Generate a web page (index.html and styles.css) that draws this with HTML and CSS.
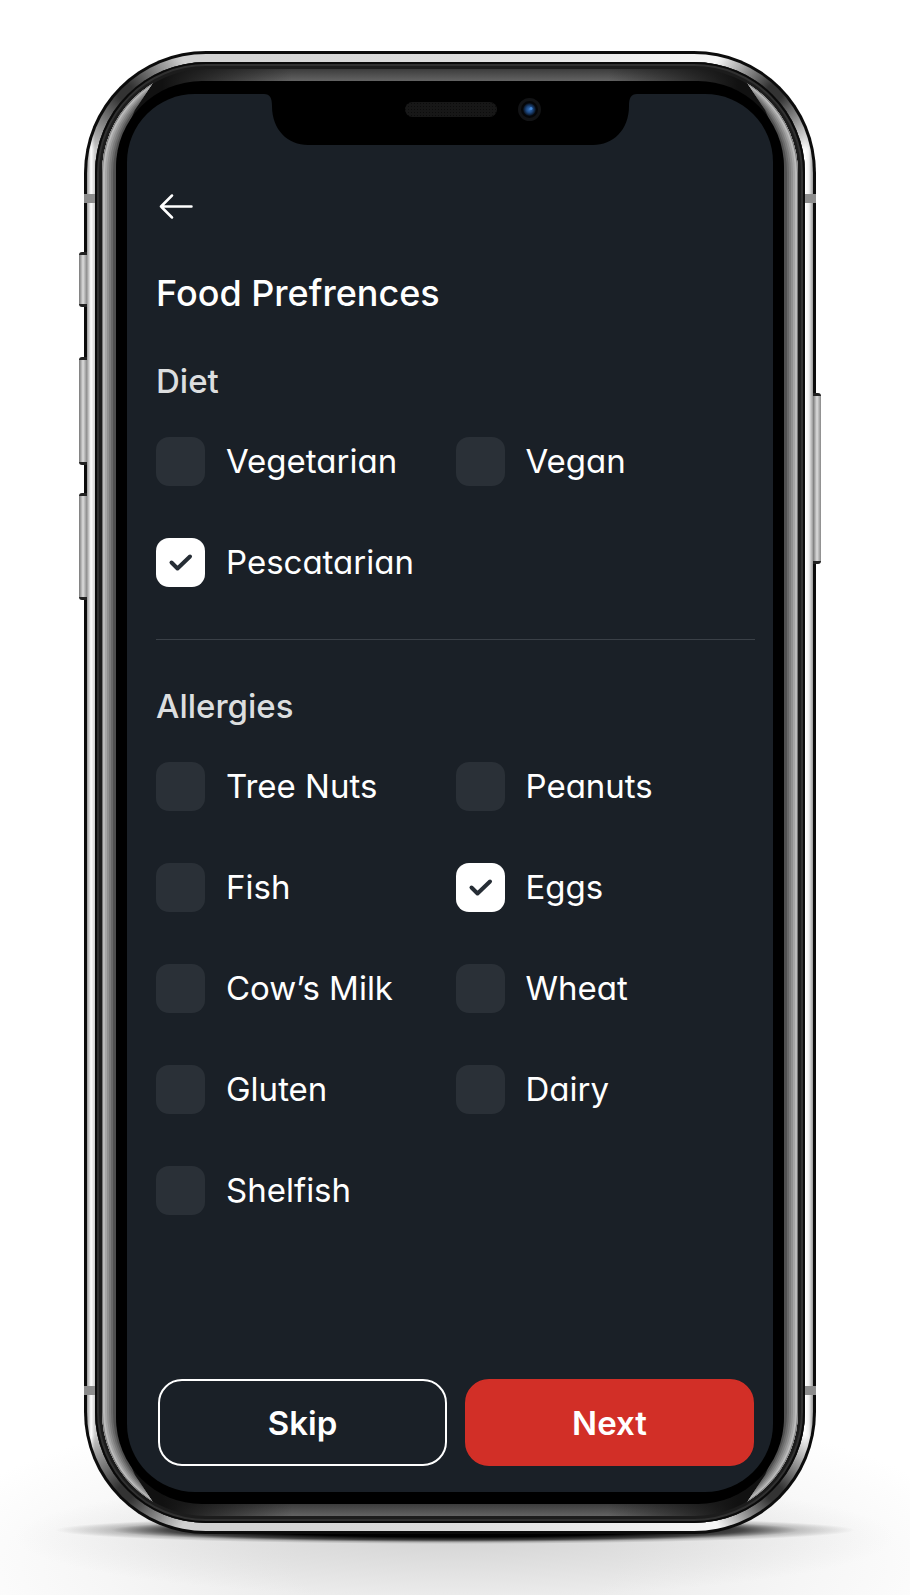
FILE: index.html
```html
<!DOCTYPE html>
<html lang="en">
  <head>
    <meta charset="UTF-8" />
    <meta name="viewport" content="width=device-width, initial-scale=1.0" />
    <title>Food Prefrences</title>
    <link rel="stylesheet" href="styles.css">
  </head>
  <body>
    <div class="stage">
      <div class="phone">
        <span class="side-button mute"></span>
        <span class="side-button volume-up"></span>
        <span class="side-button volume-down"></span>
        <span class="side-button power"></span>
        <div class="rail">
          <span class="antenna top-left"></span>
          <span class="antenna top-right"></span>
          <span class="antenna bottom-left"></span>
          <span class="antenna bottom-right"></span>
          <div class="seam">
            <div class="bezel">
              <div class="glass">
                <main class="screen">
                  <svg class="notch" width="373" height="51" viewBox="0 0 373 51" aria-hidden="true">
                    <defs>
                      <pattern id="mesh" width="3" height="3" patternUnits="userSpaceOnUse">
                        <rect width="3" height="3" fill="#171717" />
                        <rect width="1" height="1" fill="#0c0c0c" />
                      </pattern>
                      <radialGradient id="lens">
                        <stop offset="0" stop-color="#3874bd" />
                        <stop offset="0.5" stop-color="#1d477f" />
                        <stop offset="1" stop-color="#070d16" />
                      </radialGradient>
                    </defs>
                    <path d="M0 0C6 0 8 4 8 12C8 36 24 51 44 51H329C349 51 365 36 365 12C365 4 367 0 373 0Z" fill="#000" />
                    <rect x="141" y="8" width="92" height="15" rx="7.5" fill="url(#mesh)" />
                    <circle cx="265.500" cy="15.500" r="10" fill="#050608" stroke="#121315" stroke-width="3" />
                    <circle cx="265.500" cy="15.500" r="6.500" fill="url(#lens)" />
                    <circle cx="267" cy="14.500" r="1.500" fill="#4488d8" />
                  </svg>

                  <form class="content">
                    <button type="button" class="back" aria-label="Back">
                      <svg width="35" height="25" viewBox="0 0 35 25" fill="none" stroke="#fff" stroke-width="2.500" stroke-linecap="round" stroke-linejoin="round">
                        <path d="M14 1.500L3 12.500L14 23.500M3 12.500H33.500" />
                      </svg>
                    </button>
                    <h1>Food Prefrences</h1>

                    <fieldset class="group diet">
                      <legend>Diet</legend>
                      <div class="options">
                        <label><input type="checkbox" name="diet">Vegetarian</label>
                        <label><input type="checkbox" name="diet">Vegan</label>
                        <label><input type="checkbox" name="diet" checked>Pescatarian</label>
                      </div>
                    </fieldset>

                    <hr>

                    <fieldset class="group">
                      <legend>Allergies</legend>
                      <div class="options">
                        <label><input type="checkbox" name="allergy">Tree Nuts</label>
                        <label><input type="checkbox" name="allergy">Peanuts</label>
                        <label><input type="checkbox" name="allergy">Fish</label>
                        <label><input type="checkbox" name="allergy" checked>Eggs</label>
                        <label><input type="checkbox" name="allergy">Cow’s Milk</label>
                        <label><input type="checkbox" name="allergy">Wheat</label>
                        <label><input type="checkbox" name="allergy">Gluten</label>
                        <label><input type="checkbox" name="allergy">Dairy</label>
                        <label><input type="checkbox" name="allergy">Shelfish</label>
                      </div>
                    </fieldset>

                    <div class="actions">
                      <button type="button" class="skip">Skip</button>
                      <button type="submit" class="next">Next</button>
                    </div>
                  </form>
                </main>
              </div>
            </div>
          </div>
        </div>
      </div>
    </div>
  </body>
</html>
```

FILE: styles.css
```css
* {
  box-sizing: border-box;
}
body {
  margin: 0;
  background: #fff;
  font-family: Inter, "Noto Sans", sans-serif;
  font-feature-settings: "cv11";
}
/* floor shadow under the phone */
.stage {
  padding: 51px 94px 61px 84px;
  background:
    radial-gradient(ellipse 400px 14px at 50% calc(100% - 65px), #000 50%, rgba(0, 0, 0, 0.7) 72%, rgba(0, 0, 0, 0.2) 86%, transparent 100%) no-repeat,
    radial-gradient(ellipse 440px 60px at 50% calc(100% - 58px), #d4d4d4, transparent) no-repeat,
    radial-gradient(ellipse 540px 170px at 50% calc(100% - 30px), #ececec 30%, #f6f6f6 65%, #fff 100%) no-repeat;
}
.phone {
  position: relative;
  max-width: 732px;
  margin: 0 auto;
  padding: 3px;
  border-radius: 122px;
  background: #0c0c0c;
}
.rail {
  position: relative;
  padding: 8px;
  border-radius: 119px;
  background:
    radial-gradient(circle at 38px 38px, #333 8px, transparent 66px),
    radial-gradient(circle at calc(100% - 38px) 38px, #333 8px, transparent 66px),
    radial-gradient(circle at 38px calc(100% - 38px), #333 8px, transparent 66px),
    radial-gradient(circle at calc(100% - 38px) calc(100% - 38px), #333 8px, transparent 66px),
    linear-gradient(to right, #999, #fff 4px, #ccc 8px, #dcdcdc 50%, #fff calc(100% - 8px), #eee calc(100% - 4px), #999);
}
.seam {
  padding: 7px;
  border-radius: 111px;
  background: #1c1c1c;
  box-shadow: inset 0 0 0 2px #0a0a0a, inset 0 0 0 4px #303030;
}
.bezel {
  position: relative;
  padding: 12px 14px;
  border-radius: 104px;
  background:
    linear-gradient(to right, #111 60px, transparent 190px, transparent calc(100% - 190px), #111 calc(100% - 60px)),
    linear-gradient(#3c3c3c, #636363 12px, #333 50%, #3c3c3c calc(100% - 12px), #636363);
}
/* side reflections that taper off into the corners */
.bezel::before {
  content: "";
  position: absolute;
  inset: 0;
  border-radius: inherit;
  clip-path: polygon(
    0 0, 54px 9px, 33px 41px, 22px 66px, 16px 100px,
    16px calc(100% - 100px), 22px calc(100% - 66px), 33px calc(100% - 41px), 54px calc(100% - 9px), 0 100%,
    0 0, 100% 0,
    calc(100% - 54px) 9px, calc(100% - 33px) 41px, calc(100% - 22px) 66px, calc(100% - 16px) 100px,
    calc(100% - 16px) calc(100% - 100px), calc(100% - 22px) calc(100% - 66px), calc(100% - 33px) calc(100% - 41px), calc(100% - 54px) calc(100% - 9px), 100% 100%,
    100% 0
  );
  box-shadow:
    inset 1px 0 #777, inset -1px 0 #777,
    inset 3px 0 #bbb, inset -3px 0 #bbb,
    inset 5px 0 #a5a5a5, inset -5px 0 #a5a5a5,
    inset 7px 0 #909090, inset -7px 0 #909090,
    inset 9px 0 #7c7c7c, inset -9px 0 #7c7c7c,
    inset 11px 0 #686868, inset -11px 0 #686868,
    inset 14px 0 #505050, inset -14px 0 #505050;
}
.glass {
  position: relative;
  padding: 13px 11px 12px;
  border-radius: 86px;
  background: #000;
}
.screen {
  display: flex;
  flex-direction: column;
  border-radius: 68px;
  background: #1a2027;
  color: #fff;
}
.notch {
  align-self: center;
  max-width: 100%;
}

.side-button {
  position: absolute;
  left: -5px;
  width: 8px;
  border: solid #222;
  border-width: 3px 0;
  border-radius: 3px 0 0 3px;
  background: linear-gradient(to right, #777, #ddd 4px, #888);
}
.mute {
  top: 201px;
  height: 55px;
}
.volume-up {
  top: 306px;
  height: 108px;
}
.volume-down {
  top: 442px;
  height: 107px;
}
.power {
  top: 342px;
  right: -5px;
  left: auto;
  height: 171px;
  border-radius: 0 3px 3px 0;
}
.antenna {
  position: absolute;
  width: 11px;
  height: 9px;
  background: #8c8c8c;
}
.top-left {
  top: 140px;
  left: -3px;
}
.top-right {
  top: 140px;
  right: -3px;
}
.bottom-left {
  bottom: 136px;
  left: -3px;
}
.bottom-right {
  bottom: 136px;
  right: -3px;
}

.content {
  padding: 49px 18px 26px 29px;
}
button {
  font: inherit;
  color: inherit;
  cursor: pointer;
}
.back {
  display: block;
  padding: 0 2px;
  border: none;
  background: none;
}
.back svg {
  display: block;
}
h1 {
  margin: 50px 0 44px;
  font-size: 36px;
  font-weight: 500;
  line-height: 48px;
}
.group {
  margin: 0;
  padding: 0;
  border: none;
}
legend {
  padding: 0;
  margin-bottom: 36px;
  font-size: 33px;
  font-weight: 500;
  line-height: 40px;
  color: #dcdedf;
}
.options {
  display: grid;
  grid-template-columns: 1fr 1fr;
  row-gap: 52px;
}
.options label {
  display: flex;
  align-items: center;
  gap: 21px;
  font-size: 33px;
  line-height: 49px;
  white-space: nowrap;
  cursor: pointer;
}
.options input {
  appearance: none;
  flex: none;
  width: 49px;
  height: 49px;
  margin: 0;
  border-radius: 13px;
  background: #2a3037;
  cursor: pointer;
}
.options input:checked {
  background: #fff url("data:image/svg+xml,%3Csvg xmlns='http://www.w3.org/2000/svg' viewBox='0 0 49 49' fill='none' stroke='%23262d35' stroke-width='4' stroke-linecap='round' stroke-linejoin='round'%3E%3Cpath d='M15.500 24.500L21.500 30.500L34 18.500'/%3E%3C/svg%3E");
}
hr {
  height: 1px;
  margin: 52px 0 46px;
  border: none;
  background: #3a4047;
}
.actions {
  display: flex;
  gap: 18px;
  margin-top: 164px;
  padding: 0 1px 0 2px;
}
.actions button {
  flex: 1;
  height: 87px;
  border: 2px solid #fff;
  border-radius: 24px;
  background: none;
  font-size: 33px;
  font-weight: 600;
}
.actions .next {
  border-color: #d22f27;
  background: #d22f27;
}
```
